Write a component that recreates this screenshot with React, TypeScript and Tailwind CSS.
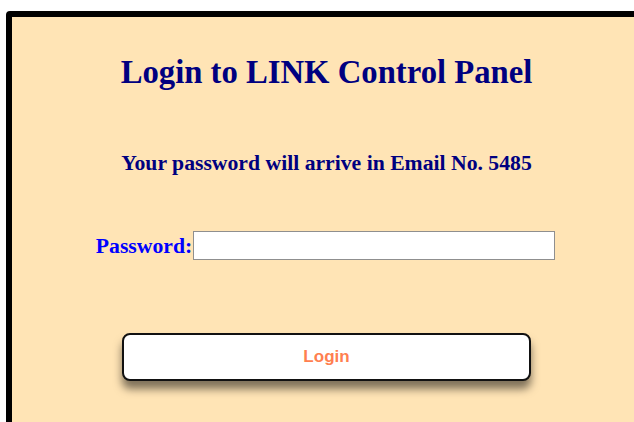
export default function App() {
  return (
    <div className="h-[422px] w-[634px] overflow-hidden bg-white">
      <div className="ml-[6px] mt-[11px] h-[600px] w-[641px] rounded-tl-[4px] border-[6px] border-black bg-[#FFE4B5] pt-[35px]" style={{ fontFamily: '"Liberation Serif", "Times New Roman", serif' }}>
        <h1 className="text-center text-[32.7px] font-bold leading-[40px] text-[#000080]">
          Login to LINK Control Panel
        </h1>
        <h3 className="mt-[59px] text-center text-[21.7px] font-bold leading-[24px] text-[#000080]">
          Your password will arrive in Email No. 5485
        </h3>
        <div className="mt-[56px] flex items-center justify-center">
          <label className="text-[21.7px] font-bold leading-[24px] text-[#0000FF]">Password:</label>
          <input
            type="password"
            className="ml-[1px] mr-[2px] h-[29px] w-[362px] border border-[#8f8f8f] bg-white px-1"
          />
        </div>
        <div className="mt-[73px] flex justify-center">
          <button className="h-[48px] w-[409px] rounded-[8px] border-2 border-[#111] bg-white text-[17px] font-bold text-[#FF7F50] shadow-[0_8px_9px_rgba(0,0,0,0.5)]" style={{ fontFamily: '"Liberation Sans", Arial, sans-serif' }}>
            Login
          </button>
        </div>
      </div>
    </div>
  );
}
